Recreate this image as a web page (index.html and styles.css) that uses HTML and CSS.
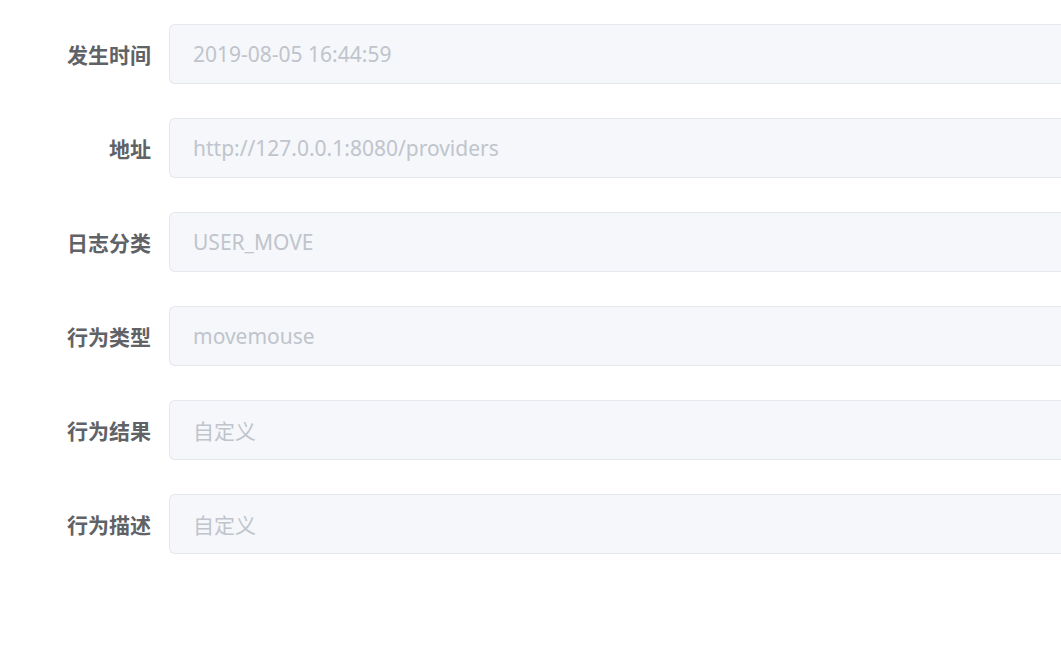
FILE: index.html
```html
<!DOCTYPE html>
<html lang="zh-CN">
<head>
<meta charset="utf-8">
<title>日志详情</title>
<link rel="stylesheet" href="styles.css">
</head>
<body>
<form class="form">
  <div class="form-item">
    <label class="label">发生时间</label>
    <div class="field"><input class="input" disabled value="2019-08-05 16:44:59"></div>
  </div>
  <div class="form-item">
    <label class="label">地址</label>
    <div class="field"><input class="input" disabled value="http://127.0.0.1:8080/providers"></div>
  </div>
  <div class="form-item">
    <label class="label">日志分类</label>
    <div class="field"><input class="input" disabled value="USER_MOVE"></div>
  </div>
  <div class="form-item">
    <label class="label">行为类型</label>
    <div class="field"><input class="input" disabled value="movemouse"></div>
  </div>
  <div class="form-item">
    <label class="label">行为结果</label>
    <div class="field"><input class="input" disabled value="自定义"></div>
  </div>
  <div class="form-item">
    <label class="label">行为描述</label>
    <div class="field"><input class="input" disabled value="自定义"></div>
  </div>
</form>
</body>
</html>
```
FILE: styles.css
```css
html, body {
  margin: 0;
  padding: 0;
  background: #ffffff;
  overflow: hidden;
}
body {
  font-family: "Noto Sans", "Noto Sans CJK SC", sans-serif;
}
.form {
  padding-top: 24px;
}
.form-item {
  display: flex;
  align-items: center;
  margin-bottom: 34px;
}
.label {
  width: 169px;
  box-sizing: border-box;
  padding-right: 18px;
  text-align: right;
  font-family: "Noto Sans CJK SC", sans-serif;
  font-weight: 700;
  font-size: 21px;
  color: #606266;
  line-height: 60px;
}
.field {
  flex: 1;
  min-width: 0;
}
.input {
  display: block;
  width: 100%;
  box-sizing: border-box;
  height: 60px;
  padding: 0 23px;
  border: 1px solid #e4e7ed;
  border-right: none;
  border-radius: 6px 0 0 6px;
  background: #f5f7fa;
  color: #c0c4cc;
  font-family: "Noto Sans", "Noto Sans CJK SC", sans-serif;
  font-size: 21px;
  outline: none;
  -webkit-text-fill-color: #c0c4cc;
  opacity: 1;
}
```
